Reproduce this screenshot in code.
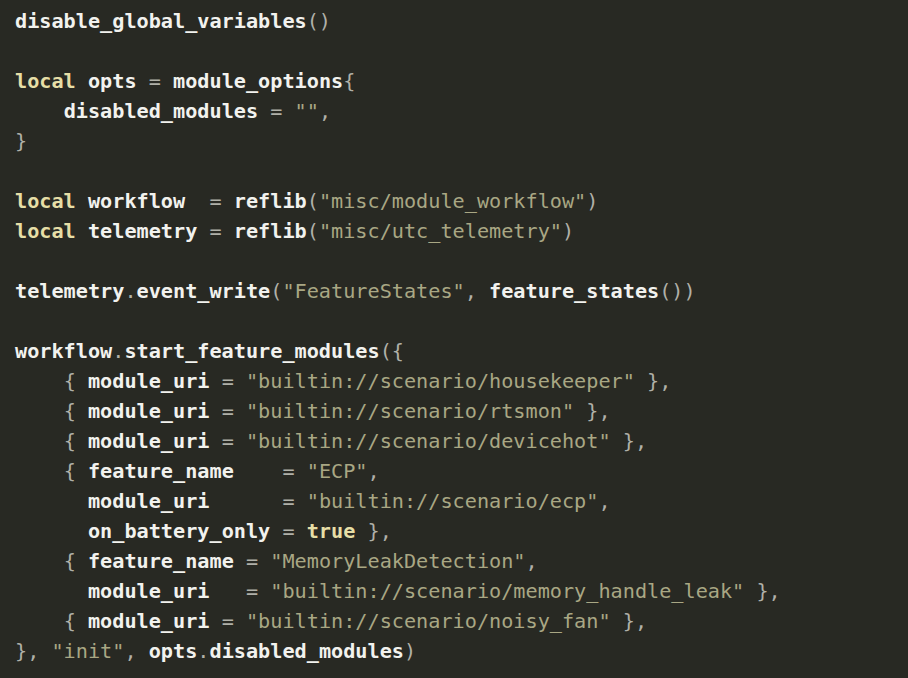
const source = `disable_global_variables()

local opts = module_options{
    disabled_modules = "",
}

local workflow  = reflib("misc/module_workflow")
local telemetry = reflib("misc/utc_telemetry")

telemetry.event_write("FeatureStates", feature_states())

workflow.start_feature_modules({
    { module_uri = "builtin://scenario/housekeeper" },
    { module_uri = "builtin://scenario/rtsmon" },
    { module_uri = "builtin://scenario/devicehot" },
    { feature_name    = "ECP",
      module_uri      = "builtin://scenario/ecp",
      on_battery_only = true },
    { feature_name = "MemoryLeakDetection",
      module_uri   = "builtin://scenario/memory_handle_leak" },
    { module_uri = "builtin://scenario/noisy_fan" },
}, "init", opts.disabled_modules)`;

type Token = { text: string; kind: "kw" | "str" | "id" | "punct" | "ws" };

const tokenize = (line: string): Token[] => {
  const out: Token[] = [];
  const re = /("[^"]*")|(\b(?:local|true)\b)|([A-Za-z_][A-Za-z0-9_]*)|(\s+)|(.)/g;
  let m: RegExpExecArray | null;
  while ((m = re.exec(line))) {
    if (m[1]) out.push({ text: m[1], kind: "str" });
    else if (m[2]) out.push({ text: m[2], kind: "kw" });
    else if (m[3]) out.push({ text: m[3], kind: "id" });
    else if (m[4]) out.push({ text: m[4], kind: "ws" });
    else out.push({ text: m[5], kind: "punct" });
  }
  return out;
};

const tokenClass = {
  kw: "text-[#e6dea6] font-bold",
  str: "text-[#a9a784]",
  id: "text-[#f2f2ee] font-bold",
  punct: "text-[#b0b0a8]",
  ws: "",
};

export default function App() {
  return (
    <div className="h-[678px] w-[908px] overflow-hidden bg-[#282923] pl-[15px] pt-[6px] font-['DejaVu_Sans_Mono',monospace] text-[20.2px] leading-[30px]">
      {source.split("\n").map((line, i) => (
        <div key={i} className="h-[30px] whitespace-pre">
          {tokenize(line).map((t, j) => (
            <span key={j} className={tokenClass[t.kind]}>
              {t.text}
            </span>
          ))}
        </div>
      ))}
    </div>
  );
}
